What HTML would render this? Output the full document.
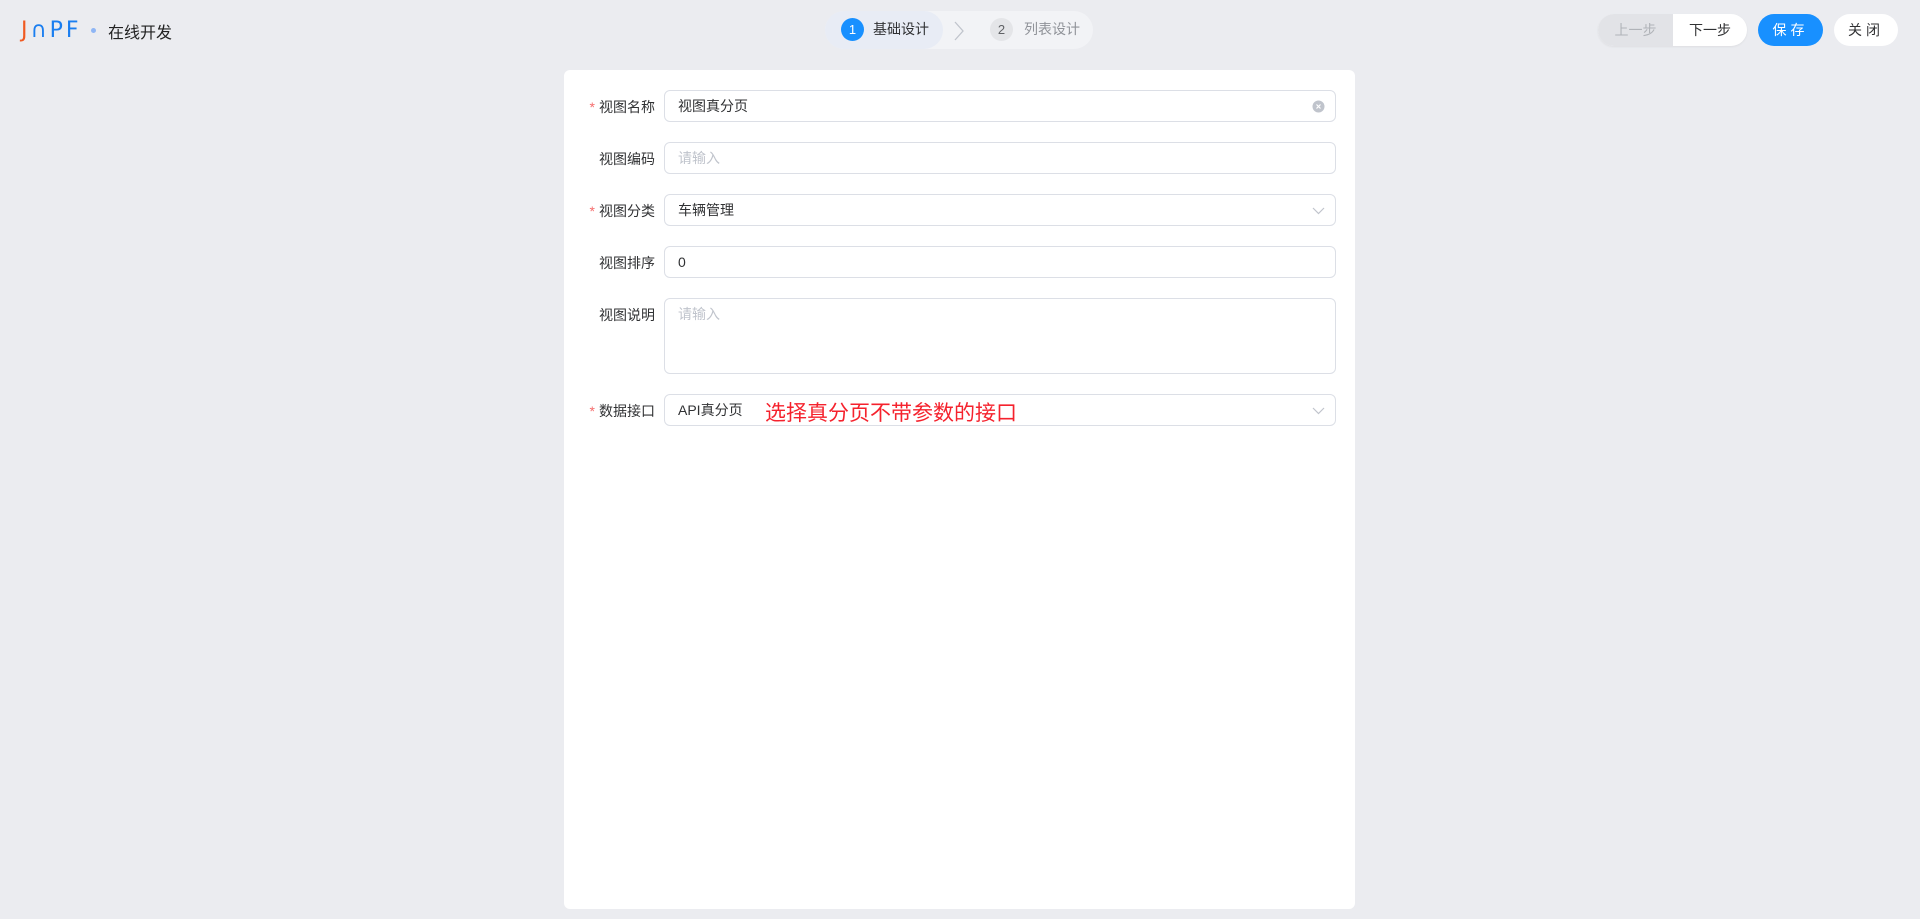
<!DOCTYPE html>
<html><head><meta charset="utf-8"><style>
*{box-sizing:border-box;margin:0;padding:0}
body{width:1920px;height:919px;background:#ebecf0;font-family:"Liberation Sans","Noto Sans CJK SC",sans-serif;position:relative;overflow:hidden;color:#303133}
.abs{position:absolute}
.logo{left:21px;top:18px;font-size:22px;font-weight:normal;letter-spacing:3px;color:#1a7ef0;font-family:"DejaVu Sans",sans-serif}
.title{left:108px;top:19px;font-size:16px;color:#222}
.steps{left:825px;top:11px;width:268px;height:38px;border-radius:19px;background:#f2f3f6}
.s1{left:825px;top:11px;width:118px;height:38px;border-radius:19px;background:#e8ecf5}
.circ{width:23px;height:23px;border-radius:50%;font-size:13px;text-align:center;line-height:23px}
.btn{height:32px;border-radius:16px;font-size:14px;text-align:center;line-height:32px}
.card{left:564px;top:70px;width:791px;height:839px;background:#fff;border-radius:6px}
.lbl{font-size:14px;color:#303133;text-align:right;width:90px;left:565px}
.req::before{content:"*";color:#f56c6c;margin-right:4px}
.inp{left:664px;width:672px;height:32px;border:1px solid #dcdfe6;border-radius:6px;font-size:14px;padding-left:13px;line-height:30px}
.ph{color:#c0c4cc}
.arrow{position:absolute;right:10px;top:9px}
</style></head><body>
<div class="abs logo"><span style="color:#f05a22">J</span>∩PF</div>
<div class="abs" style="left:91px;top:28px;width:5px;height:5px;border-radius:50%;background:#8fb6f5"></div>
<div class="abs title">在线开发</div>
<div class="abs steps"></div>
<div class="abs s1"></div>
<div class="abs circ" style="left:841px;top:18px;background:#1890ff;color:#fff">1</div>
<div class="abs" style="left:873px;top:19px;font-size:14px;color:#303133">基础设计</div>
<svg class="abs" style="left:952px;top:20px" width="14" height="22"><path d="M3 2 L11 11 L3 20" fill="none" stroke="#c0c4cc" stroke-width="1.3"/></svg>
<div class="abs circ" style="left:990px;top:18px;background:#e4e5e8;color:#606266">2</div>
<div class="abs" style="left:1024px;top:19px;font-size:14px;color:#909399">列表设计</div>
<div class="abs btn" style="left:1598px;top:14px;width:149px;background:#fff;box-shadow:0 1px 2px rgba(0,0,0,.06)"></div>
<div class="abs btn" style="left:1598px;top:14px;width:75px;background:#e2e3e7;color:#b0b3b8;border-radius:16px 0 0 16px">上一步</div>
<div class="abs btn" style="left:1673px;top:14px;width:74px;color:#303133">下一步</div>
<div class="abs btn" style="left:1758px;top:14px;width:65px;background:#1890ff;color:#fff;letter-spacing:4px">保存</div>
<div class="abs btn" style="left:1834px;top:14px;width:64px;background:#fff;color:#303133;letter-spacing:4px">关闭</div>
<div class="abs card"></div>

<div class="abs lbl req" style="top:97px">视图名称</div>
<div class="abs inp" style="top:90px">视图真分页<svg class="arrow" style="top:9px" width="13" height="13"><circle cx="6.5" cy="6.5" r="6" fill="#c0c4cc"/><path d="M4.5 4.5l4 4M8.5 4.5l-4 4" stroke="#fff" stroke-width="1.2"/></svg></div>

<div class="abs lbl" style="top:149px">视图编码</div>
<div class="abs inp ph" style="top:142px">请输入</div>

<div class="abs lbl req" style="top:201px">视图分类</div>
<div class="abs inp" style="top:194px">车辆管理<svg class="arrow" width="13" height="13"><path d="M1 4l5.5 5.5L12 4" fill="none" stroke="#c0c4cc" stroke-width="1.2"/></svg></div>

<div class="abs lbl" style="top:253px">视图排序</div>
<div class="abs inp" style="top:246px">0</div>

<div class="abs lbl" style="top:305px">视图说明</div>
<div class="abs inp ph" style="top:298px;height:76px;line-height:20px;padding-top:5px">请输入</div>

<div class="abs lbl req" style="top:401px">数据接口</div>
<div class="abs inp" style="top:394px">API真分页<svg class="arrow" width="13" height="13"><path d="M1 4l5.5 5.5L12 4" fill="none" stroke="#c0c4cc" stroke-width="1.2"/></svg></div>
<div class="abs" style="left:765px;top:397px;font-size:21px;color:#f5222d">选择真分页不带参数的接口</div>
</body></html>
